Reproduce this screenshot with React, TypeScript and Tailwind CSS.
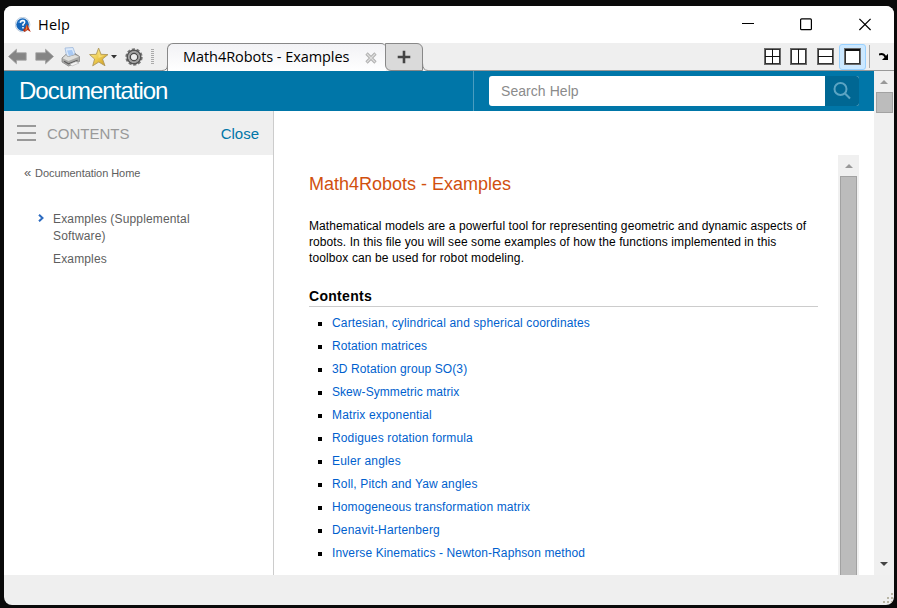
import React from "react";

const links: [string, string][] = [
  ["Cartesian, cylindrical and spherical coordinates", "tracking-[0.15px]"],
  ["Rotation matrices", "tracking-[0.1px]"],
  ["3D Rotation group SO(3)", "tracking-[0.11px]"],
  ["Skew-Symmetric matrix", "tracking-[0.06px]"],
  ["Matrix exponential", "tracking-[0.14px]"],
  ["Rodigues rotation formula", "tracking-[0.14px]"],
  ["Euler angles", "tracking-[0.18px]"],
  ["Roll, Pitch and Yaw angles", "tracking-[0.15px]"],
  ["Homogeneous transformation matrix", "tracking-[0.12px]"],
  ["Denavit-Hartenberg", "tracking-[0.18px]"],
  ["Inverse Kinematics - Newton-Raphson method", "tracking-[0.12px]"],
];

function HelpLogo() {
  return (
    <svg width="16" height="16" viewBox="0 0 16 16">
      <circle cx="7.6" cy="7.6" r="7.3" fill="#eef4fa" stroke="#a9bdd3" strokeWidth=".7" />
      <circle cx="7.6" cy="7.6" r="6.3" fill="#1464b8" />
      <path d="M2.6 6Q5 1 11 3L6 6z" fill="#3f8bd6" />
      <path d="M5.4 5.8Q5.5 3.5 7.7 3.5Q10 3.7 9.6 5.6Q9.3 6.7 8 7.4V8.8M8 10V11.4" fill="none" stroke="#fff" strokeWidth="1.5" />
      <path d="M7.7 13Q10 12 12 7Q13.5 10 15.8 15L12.5 13L9.5 15z" fill="#b83216" />
      <path d="M11.9 7.4L12.2 12L10 14Q11.2 11 11.9 7.4z" fill="#f08a3c" />
    </svg>
  );
}

function Arrow({ flip = false }: { flip?: boolean }) {
  return (
    <svg width="19" height="17" viewBox="0 0 19 17" className={flip ? "-scale-x-100" : ""}>
      <path d="M.5 8.5L8.5 1.2V4.8H18.2V12.2H8.5V15.8z" fill="#858585" stroke="#a2a2a2" strokeWidth=".8" />
    </svg>
  );
}

function Printer() {
  return (
    <svg width="20" height="20" viewBox="0 0 20 20">
      <path d="M4 1L12 .5L15 9L6 11z" fill="#dceafb" stroke="#9db8da" strokeWidth=".8" />
      <path d="M6 3.5L11 3L13 8L8 9z" fill="#a9c9f3" />
      <path d="M1 11L5 7.5L7 10L14 8L14 6.5L18.5 9.5V14.5L7.5 19L1 15z" fill="#a8a8a6" stroke="#858585" strokeWidth=".8" />
      <path d="M1.5 11.2L7.5 14L18 9.8L14 8L7 10L5 8z" fill="#dededb" />
      <path d="M3 14.2L7.5 16.8L16.5 13.3" fill="none" stroke="#5f5f5f" strokeWidth="1.3" />
      <path d="M9 17L15 14.6L18 16L11 19z" fill="#f5f5f5" stroke="#aaa" strokeWidth=".5" />
    </svg>
  );
}

function Star() {
  return (
    <svg width="20" height="20" viewBox="0 0 20 20">
      <defs>
        <linearGradient id="gold" x1="0" y1="0" x2="1" y2="1">
          <stop offset="0" stopColor="#fff3a0" />
          <stop offset=".5" stopColor="#edcb50" />
          <stop offset="1" stopColor="#c8941c" />
        </linearGradient>
      </defs>
      <path d="M9.6 1L12 7.3L19 7.6L13.5 12L16 18.8L9.8 15L3.7 18.8L5.6 12L.6 7.6L7.3 7.3z" fill="url(#gold)" stroke="#b0985a" strokeWidth=".9" />
      <path d="M9.6 3L11 8.4L16 8.6L9.5 11z" fill="#fff0a0" opacity=".5" />
    </svg>
  );
}

function Gear() {
  return (
    <svg width="18" height="18" viewBox="0 0 18 18" fill="none">
      <circle cx="9" cy="9" r="7.8" stroke="#777" strokeWidth="1.8" strokeDasharray="3.1 1.8" />
      <circle cx="9" cy="9" r="6.6" stroke="#555" strokeWidth="1.8" />
      <circle cx="9" cy="9" r="5" stroke="#a0a0a0" strokeWidth="1.8" />
      <circle cx="9" cy="9" r="3.6" stroke="#4c4c4c" strokeWidth="1.5" />
      <circle cx="9" cy="9" r="2.8" fill="#ededed" />
    </svg>
  );
}

function LayoutIcon({ d }: { d: string }) {
  return (
    <svg width="17" height="17" viewBox="0 0 17 17" fill="none" shapeRendering="crispEdges">
      <path d="M.5 .5H16.5V16.5H.5z" stroke="#6b6b6b" />
      <path d="M1.5 1.5H15.5V15.5H1.5z" fill="#fff" stroke="#333" />
      <path d={d} stroke="#111" />
    </svg>
  );
}

function Grip() {
  return (
    <svg width="11" height="11" viewBox="0 0 11 11" fill="#b8b5a5" shapeRendering="crispEdges">
      <path d="M8 0h2v2h-2zM4 4h2v2h-2zM8 4h2v2h-2zM0 8h2v2h-2zM4 8h2v2h-2zM8 8h2v2h-2z" />
    </svg>
  );
}

function TitleBar() {
  return (
    <div className="flex h-[37px] shrink-0 items-center bg-white pl-[11px]">
      <HelpLogo />
      <span className="ml-[7px] font-['Open_Sans','Noto_Sans',sans-serif] text-[14.5px] leading-[20px] tracking-[0.2px]">Help</span>
      <svg className="ml-auto mr-[22px]" width="130" height="14" viewBox="0 0 130 14" fill="none" stroke="#000">
        <path d="M0 5.5H12" />
        <rect x="58.6" y=".9" width="10.8" height="10.8" rx="1" strokeWidth="1.2" />
        <path d="M117.4 .8L128.6 12M128.6 .8L117.4 12" strokeWidth="1.2" />
      </svg>
    </div>
  );
}

function ToolBar() {
  return (
    <div className="flex h-[28px] shrink-0 bg-[#efefef]">
      <div className="flex w-[158px] items-center border-b border-[#999] pl-[4px]">
        <Arrow />
        <div className="ml-[8px]"><Arrow flip /></div>
        <div className="ml-[7px]"><Printer /></div>
        <div className="ml-[8px]"><Star /></div>
        <svg className="ml-[2px]" width="6" height="4"><path d="M0 0H6L3 3.5z" fill="#333" /></svg>
        <div className="ml-[8px]"><Gear /></div>
        <svg className="ml-[8px]" width="3" height="16" shapeRendering="crispEdges"><path d="M1.5 0V16" stroke="#aaa" strokeWidth="3" strokeDasharray="1 1" /></svg>
      </div>
      <svg width="6" height="28" fill="none"><path d="M0 27.5Q5.5 27.5 5.5 22V0" stroke="#888" /><path d="M5.5 0V5" stroke="#efefef" strokeWidth="2" /></svg>
      <div className="-ml-px flex h-[28px] w-[219px] items-center rounded-tl-[6px] rounded-tr-[5px] border-l border-t border-[#888] bg-gradient-to-b from-[#f2f2f5] to-white pl-[15px]">
        <span className="whitespace-nowrap pb-[2px] font-['Open_Sans','Noto_Sans',sans-serif] text-[14.5px] leading-[20px] tracking-[-0.06px]">Math4Robots - Examples</span>
        <svg className="ml-auto mr-[9px]" width="12" height="12" viewBox="0 0 12 12"><path d="M1.5 1.5L10.5 10.5M10.5 1.5L1.5 10.5" stroke="#b0b0b0" strokeWidth="3.2" /><path d="M2 2L10 10M10 2L2 10" stroke="#dedede" strokeWidth="1.2" /></svg>
      </div>
      <div className="-ml-px flex h-[28px] w-[38px] items-center justify-center rounded-bl-[6px] rounded-tr-[6px] border border-[#888] bg-[#dadada]">
        <svg width="14" height="14"><path d="M7 .7V13.3M.7 7H13.3" stroke="#444" strokeWidth="2.6" /></svg>
      </div>
      <svg className="-ml-px" width="6" height="28" fill="none"><path d="M.5 20Q.5 27.5 6 27.5" stroke="#888" /></svg>
      <div className="flex flex-1 items-center justify-end border-b border-[#999]">
        <div className="flex items-center">
          <LayoutIcon d="M8.5 1V16M1 8.5H16" />
          <div className="ml-[9px]"><LayoutIcon d="M8.5 1V16" /></div>
          <div className="ml-[10px]"><LayoutIcon d="M1 8.5H16" /></div>
        </div>
        <div className="ml-[5px] flex h-[26px] w-[27px] items-center justify-center rounded-[3px] border border-[#99d1ff] bg-[#cce8ff]">
          <LayoutIcon d="M1 1.5H16M1 2.5H16" />
        </div>
        <div className="ml-[3px] h-[23px] w-px bg-[#aaa]" />
        <svg className="ml-[9px] mr-[5px]" width="10" height="9"><path d="M0 2.5Q4.5 1 6.5 5" fill="none" stroke="#000" strokeWidth="1.9" /><path d="M9 1.8V8H3z" fill="#000" /></svg>
      </div>
    </div>
  );
}

function Header() {
  return (
    <div className="flex h-[40px] shrink-0 bg-[#0076a8] text-white">
      <div className="w-[470px] border-r border-[#4a9dc0] pl-[15px] text-[24px] leading-[39px] tracking-[-1px]">Documentation</div>
      <div className="my-[5px] ml-[15px] flex h-[30px] w-[370px] overflow-hidden rounded-[3px] bg-white">
        <span className="flex-1 pl-[12px] text-[14px] leading-[30px] tracking-[0.06px] text-[#8b8b8b]">Search Help</span>
        <div className="flex w-[34px] items-center justify-center bg-[#006793]">
          <svg width="18" height="18" fill="none" stroke="#5ba4c3" strokeWidth="2"><circle cx="7.5" cy="7" r="6" /><path d="M11.8 11.3L17 16.5" /></svg>
        </div>
      </div>
    </div>
  );
}

function Sidebar() {
  return (
    <aside className="w-[270px] shrink-0 border-r border-[#ccc] text-[#5e5e5e]">
      <div className="flex h-[44px] items-center bg-[#efefef] pl-[13px] pr-[14px] text-[15px]">
        <div className="flex flex-col gap-[5px]">
          <div className="h-[2px] w-[19px] bg-[#999]" />
          <div className="h-[2px] w-[19px] bg-[#999]" />
          <div className="h-[2px] w-[19px] bg-[#999]" />
        </div>
        <span className="ml-[11px] pt-[2px] text-[#999]">CONTENTS</span>
        <span className="ml-auto pt-[2px] text-[#0076a8]">Close</span>
      </div>
      <div className="mt-[10px] flex pl-[20px] text-[11px] leading-[16px]">
        <span className="w-[11px] text-[13px] leading-[15px]">«</span>
        <span className="tracking-[-0.06px]">Documentation Home</span>
      </div>
      <div className="mt-[30px] flex pl-[34px]">
        <svg className="mt-[3px]" width="6" height="8" fill="none"><path d="M1 .7L4.5 4L1 7.3" stroke="#2d6bc0" strokeWidth="2" /></svg>
        <div className="ml-[9px] text-[12px] leading-[17px] tracking-[0.15px]">
          <div>Examples (Supplemental</div>
          <div>Software)</div>
          <div className="mt-[6px]">Examples</div>
        </div>
      </div>
    </aside>
  );
}

function Article() {
  return (
    <main className="mt-[44px] w-[564px] shrink-0 overflow-hidden pl-[35px] pr-[20px]">
      <h1 className="mt-[18px] text-[18px] leading-[22px] text-[#d1500f]">Math4Robots - Examples</h1>
      <div className="mt-[23px] whitespace-nowrap text-[12px] leading-[16px] text-black">
        <div className="tracking-[0.1px]">Mathematical models are a powerful tool for representing geometric and dynamic aspects of</div>
        <div className="tracking-[0.08px]">robots. In this file you will see some examples of how the functions implemented in this</div>
        <div className="tracking-[0.11px]">toolbox can be used for robot modeling.</div>
      </div>
      <h2 className="mt-[21px] h-[20px] border-b border-[#ccc] text-[14px] font-bold leading-[18px] tracking-[0.3px]">Contents</h2>
      <ul className="mt-[5px] text-[12px] leading-[23px] text-[#005fce]">
        {links.map(([label, spacing]) => (
          <li key={label} className="flex h-[23px] items-center whitespace-nowrap pl-[9px]">
            <span className="mt-[1px] h-[4px] w-[4px] bg-black" />
            <span className={"ml-[10px] " + spacing}>{label}</span>
          </li>
        ))}
      </ul>
    </main>
  );
}

export default function App() {
  return (
    <div className="h-[608px] w-[897px] overflow-hidden bg-[#0a0a0a] pl-[4px] pt-[6px] font-['Liberation_Sans',Arial,sans-serif] text-black">
      <div className="flex h-[599px] w-[890px] flex-col overflow-hidden rounded-[8px] bg-[#efefef]">
        <TitleBar />
        <ToolBar />
        <div className="flex h-[504px] shrink-0">
          <div className="flex w-[870px] flex-col bg-white">
            <Header />
            <div className="flex h-[464px] overflow-hidden">
              <Sidebar />
              <Article />
              <div className="mt-[44px] flex w-[21px] flex-col items-center bg-[#f0f0f0]">
                <div className="flex h-[21px] items-center"><svg width="8" height="4"><path d="M0 4L4 0L8 4z" fill="#999" /></svg></div>
                <div className="w-[17px] flex-1 border-x border-t border-[#a2a2a2] bg-[#bcbcbc]" />
              </div>
            </div>
          </div>
          <div className="flex w-[20px] flex-col items-center bg-[#f0f0f0]">
            <div className="flex h-[21px] items-center"><svg width="8" height="4"><path d="M0 4L4 0L8 4z" fill="#999" /></svg></div>
            <div className="h-[21px] w-[17px] border border-[#a2a2a2] bg-[#bcbcbc]" />
            <svg className="mb-[9px] mt-auto" width="8" height="4"><path d="M0 0H8L4 4z" fill="#444" /></svg>
          </div>
        </div>
        <div className="flex h-[30px] shrink-0 items-end justify-end pb-[1px]"><Grip /></div>
      </div>
    </div>
  );
}
